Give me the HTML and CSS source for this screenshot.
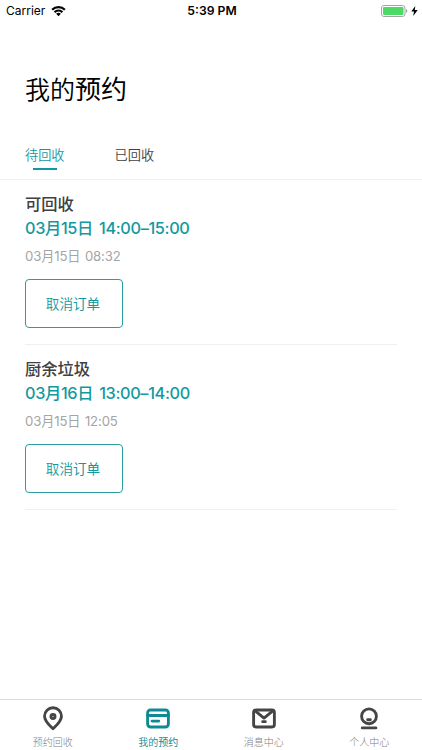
FILE: index.html
```
<!DOCTYPE html>
<html lang="zh-CN">
<head>
    <meta charset="UTF-8">
    <meta name="viewport" content="width=device-width, initial-scale=1.0">
    <title>我的预约</title>
    <link rel="stylesheet" href="styles.css">
</head>
<body>
    <div class="status-bar">
        <div class="carrier">
            <span>Carrier</span>
            <svg class="wifi" viewBox="0 0 14 11">
                <path d="M0.3 3.6a9.6 9.6 0 0 1 13.4 0L12.2 5.1a7.5 7.5 0 0 0-10.4 0z"/>
                <path d="M2.6 5.9a6.3 6.3 0 0 1 8.8 0L9.9 7.4a4.2 4.2 0 0 0-5.8 0z"/>
                <path d="M4.8 8.1a3.2 3.2 0 0 1 4.4 0L7 10.3z"/>
            </svg>
        </div>
        <div class="time">5:39 PM</div>
        <div class="power">
            <svg class="battery" viewBox="0 0 27 12">
                <rect x="0.5" y="0.5" width="23.5" height="11" rx="2.5" fill="none" stroke="#a5a5a5"/>
                <rect x="2" y="2" width="20.5" height="8" rx="1.2" fill="#4cd964"/>
                <path d="M25 4v4q1.3-.6 1.3-2T25 4z" fill="#a5a5a5"/>
            </svg>
            <svg class="bolt" viewBox="0 0 7 10"><path d="M4.3 0L0.3 5.6H3L2.2 10L6.7 4H3.8z"/></svg>
        </div>
    </div>

    <h1><span class="light">我的</span><span class="strong">预约</span></h1>

    <div class="tabs">
        <a class="tab active">待回收</a>
        <a class="tab">已回收</a>
    </div>

    <div class="list">
        <div class="order">
            <h2>可回收</h2>
            <p class="visit">03月15日 14:00–15:00</p>
            <p class="created">03月15日 08:32</p>
            <button class="cancel"><span class="light">取消</span><span class="strong">订单</span></button>
        </div>
        <div class="order">
            <h2>厨余垃圾</h2>
            <p class="visit">03月16日 13:00–14:00</p>
            <p class="created">03月15日 12:05</p>
            <button class="cancel"><span class="light">取消</span><span class="strong">订单</span></button>
        </div>
    </div>

    <div class="tabbar">
        <a class="nav-item">
            <svg class="nav-icon" viewBox="0 0 26 26">
                <path d="M13 23.6C9 19.8 4.2 15.8 4.2 10.6a8.8 8.8 0 0 1 17.6 0c0 5.2-4.8 9.2-8.8 13z"/>
                <circle cx="13" cy="11" r="2.1"/>
            </svg>
            <span>预约回收</span>
        </a>
        <a class="nav-item active">
            <svg class="nav-icon" viewBox="0 0 26 26">
                <rect x="2.2" y="4.2" width="21.6" height="17.6" rx="3"/>
                <path d="M2 9.9h22M6.8 15.7h7" stroke-linecap="round"/>
            </svg>
            <span><span class="light">我的</span><span class="strong">预约</span></span>
        </a>
        <a class="nav-item">
            <svg class="nav-icon" viewBox="0 0 26 26">
                <rect x="2.2" y="4.2" width="21.6" height="17.6" rx="2.5"/>
                <path d="M3.5 4.8L13 12.6L22.5 4.8M11.6 16.3h2.8" stroke-linecap="round"/>
            </svg>
            <span>消息中心</span>
        </a>
        <a class="nav-item">
            <svg class="nav-icon" viewBox="0 0 26 26">
                <circle cx="13" cy="10.7" r="7.7"/>
                <path d="M11.6 14.3h2.8M6 22.8h14.2" stroke-linecap="round"/>
            </svg>
            <span>个人中心</span>
        </a>
    </div>
</body>
</html>
```
FILE: styles.css
```
* { padding: 0; margin: 0; box-sizing: border-box; }
body {
    font-family: "Inter", "Noto Sans CJK SC", sans-serif;
    height: 100vh;
    display: flex;
    flex-direction: column;
    background-color: #fff;
    color: #404040;
    overflow: hidden;
}
.light { font-weight: 350; }
.strong { font-weight: 400; }

.status-bar {
    height: 22px;
    padding: 0 4px 0 6px;
    display: grid;
    grid-template-columns: 1fr auto 1fr;
    align-items: center;
    font-size: 12px;
    line-height: 22px;
    color: #000;
}
.carrier { display: flex; align-items: center; gap: 6px; }
.wifi { width: 15px; height: 12px; }
.time { font-size: 12.2px; font-weight: 600; }
.power { display: flex; align-items: center; justify-content: flex-end; gap: 3px; }
.battery { width: 27px; height: 12px; }
.bolt { width: 7px; height: 10px; }

h1 {
    margin-top: 48px;
    padding-left: 25px;
    font-size: 25.5px;
    line-height: 40px;
    color: #000;
}
h1 .light { font-size: 25px; }
h1 .strong { font-size: 26px; }
.tabs {
    display: flex;
    gap: 50px;
    height: 70px;
    padding: 35px 25px 0;
    border-bottom: 1px solid #f0f0f0;
}
.tab {
    font-size: 13.2px;
    font-weight: 350;
    line-height: 20px;
    display: flex;
    flex-direction: column;
    align-items: center;
}
.tab.active { color: #1299a0; }
.tab.active::after {
    content: "";
    width: 24px;
    height: 2px;
    margin-top: 3px;
    background-color: #1299a0;
}

.list { flex: 1; padding: 0 25px; }
.order { height: 165px; padding-top: 11px; border-bottom: 1px solid #f0f0f0; }
h2 { font-size: 16.3px; font-weight: 500; line-height: 26px; }
.visit {
    font-size: 16.3px;
    font-weight: 500;
    line-height: 22px;
    letter-spacing: -0.35px;
    word-spacing: 2px;
    color: #1299a0;
}
.created {
    margin-top: 7px;
    font-size: 13.2px;
    line-height: 20px;
    letter-spacing: -0.15px;
    word-spacing: 1px;
    color: #a5a5a5;
}
.cancel {
    width: 98px;
    height: 49px;
    margin-top: 13px;
    padding: 0 2px 2px 0;
    border: 1px solid #2a9da2;
    border-radius: 4px;
    background-color: #fff;
    color: #1299a0;
    font-family: inherit;
    font-size: 13.6px;
}

.tabbar {
    height: 51px;
    display: flex;
    border-top: 1px solid #dcdcdc;
}
.nav-item {
    flex: 1;
    display: flex;
    flex-direction: column;
    align-items: center;
    padding-top: 6px;
    font-size: 10px;
    font-weight: 300;
    line-height: 16px;
    color: #808080;
}
.nav-icon {
    width: 26px;
    height: 26px;
    margin-bottom: 3px;
    fill: none;
    stroke: #454545;
    stroke-width: 3;
    stroke-linejoin: round;
}
.nav-item.active { color: #0f8a94; }
.nav-item.active .nav-icon { stroke: #0f8a94; }
```
